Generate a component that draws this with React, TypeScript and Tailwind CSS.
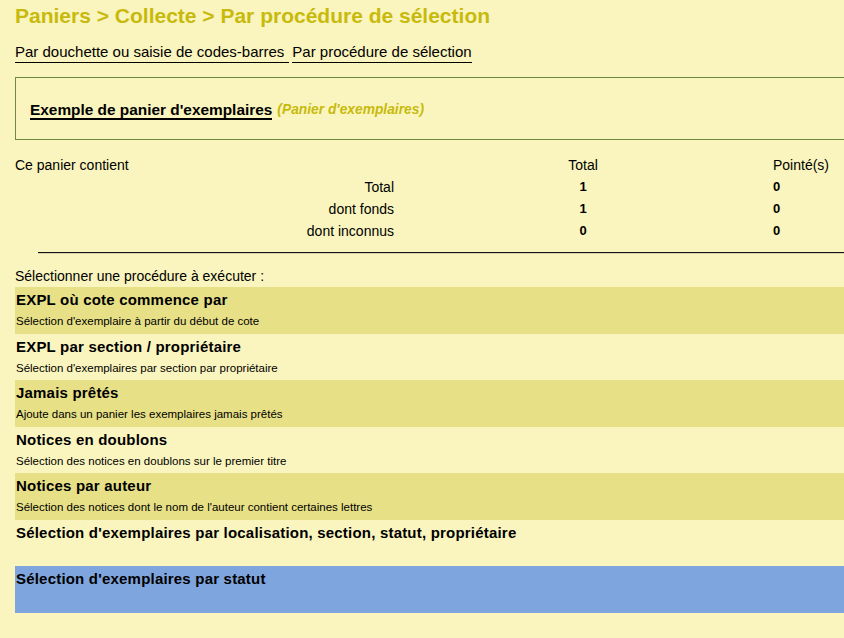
import React from 'react';

interface Procedure {
  title: string;
  desc?: string;
  tone: 'dark' | 'light' | 'blue';
}

const procedures: Procedure[] = [
  { title: 'EXPL où cote commence par', desc: 'Sélection d\'exemplaire à partir du début de cote', tone: 'dark' },
  { title: 'EXPL par section / propriétaire', desc: 'Sélection d\'exemplaires par section par propriétaire', tone: 'light' },
  { title: 'Jamais prêtés', desc: 'Ajoute dans un panier les exemplaires jamais prêtés', tone: 'dark' },
  { title: 'Notices en doublons', desc: 'Sélection des notices en doublons sur le premier titre', tone: 'light' },
  { title: 'Notices par auteur', desc: 'Sélection des notices dont le nom de l\'auteur contient certaines lettres', tone: 'dark' },
  { title: 'Sélection d\'exemplaires par localisation, section, statut, propriétaire', tone: 'light' },
  { title: 'Sélection d\'exemplaires par statut', tone: 'blue' },
];

const counts = [
  { label: 'Total', total: 1, pointes: 0 },
  { label: 'dont fonds', total: 1, pointes: 0 },
  { label: 'dont inconnus', total: 0, pointes: 0 },
];

const toneBg = {
  dark: 'bg-[#e7e087]',
  light: 'bg-transparent',
  blue: 'bg-[#7fa5de]',
};

export default function App() {
  return (
    <div className="min-h-screen w-full overflow-hidden bg-[#faf5be] text-black" style={{ fontFamily: '"Liberation Sans", Arial, sans-serif' }}>
      <div className="w-[900px] pl-[15px]">
        {/* Title */}
        <h1 className="pt-[3px] text-[21px] font-bold leading-[26px] text-[#c8ba0c]">
          Paniers &gt; Collecte &gt; Par procédure de sélection
        </h1>

        {/* Sub menu */}
        <div className="mt-[13px] flex text-[15px] leading-[20px]">
          <a className="border-b border-black pr-[5px]">Par douchette ou saisie de codes-barres </a>
          <a className="ml-[3px] border-b border-black">Par procédure de sélection</a>
        </div>

        {/* Panier box */}
        <div className="mt-[14px] flex h-[63px] items-center border border-[#6f8a3e] pl-[14px] pt-[3px]">
          <span className="border-b-2 border-black text-[15.4px] font-bold leading-[17px]">Exemple de panier d'exemplaires</span>
          <span className="ml-[5px] text-[13.8px] font-bold italic text-[#c8ba0c]">(Panier d'exemplaires)</span>
        </div>

        {/* Counts */}
        <div className="mt-[14px] text-[14px] leading-[22px]">
          <div className="flex">
            <div className="w-[379px]">Ce panier contient</div>
            <div className="w-[378px] text-center">Total</div>
            <div className="pl-[1px]">Pointé(s)</div>
          </div>
          {counts.map((c) => (
            <div key={c.label} className="flex">
              <div className="w-[379px] text-right">{c.label}</div>
              <div className="w-[378px] text-center text-[13px] font-bold">{c.total}</div>
              <div className="pl-[1px] text-[13px] font-bold">{c.pointes}</div>
            </div>
          ))}
        </div>

        <div className="ml-[23px] mt-[10px] border-t border-b border-t-[#111] border-b-[#d8d4a8]" />

        <div className="mt-[12px] text-[14px] leading-[20px]">Sélectionner une procédure à exécuter :</div>

        {/* Procedures */}
        <div className="mt-[1px]">
          {procedures.map((p) => (
            <div key={p.title} className={`h-[46.5px] pl-[1px] ${toneBg[p.tone]}`}>
              <div className="pt-[3px] text-[15px] font-bold leading-[20px] tracking-[0.2px]">{p.title}</div>
              {p.desc && <div className="mt-[1px] text-[11.5px] leading-[20px]">{p.desc}</div>}
            </div>
          ))}
        </div>
      </div>
    </div>
  );
}
